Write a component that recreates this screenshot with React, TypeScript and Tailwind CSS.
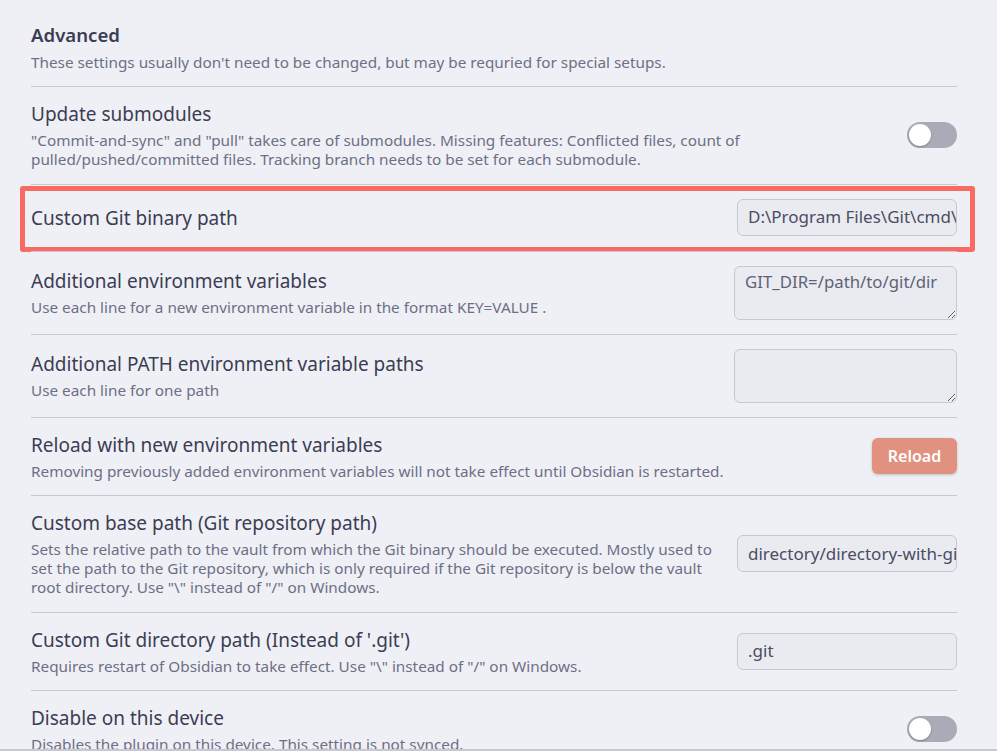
import React from "react";

const font = { fontFamily: '"Noto Sans", "Open Sans", sans-serif' };

function Toggle() {
  return (
    <div className="relative h-[26px] w-[50px] shrink-0 rounded-full bg-[#a9abb9]">
      <div className="absolute left-[2px] top-[2px] h-[22px] w-[22px] rounded-full bg-white shadow-[0_1px_2px_rgba(0,0,0,0.25)]" />
    </div>
  );
}

function TextInput({ value }: { value: string }) {
  return (
    <div className="flex h-[37px] w-[220px] shrink-0 items-center overflow-hidden whitespace-nowrap rounded-[6px] border border-[#c6c8d3] bg-[#e9ebf1] pl-[10px] text-[17px] text-[#4b4d62]">
      {value}
    </div>
  );
}

function Area({ placeholder }: { placeholder?: string }) {
  return (
    <textarea
      readOnly
      placeholder={placeholder}
      className="block h-[54px] w-[223px] shrink-0 rounded-[6px] border border-[#c6c8d3] bg-[#e9ebf1] px-[10px] py-[3px] text-[16.8px] leading-[24px] text-[#4b4d62] outline-none placeholder:text-[#5f6277]"
      style={font}
    />
  );
}

function Row({
  title,
  desc,
  control,
  children,
  tall,
}: {
  title: string;
  desc?: React.ReactNode;
  control: React.ReactNode;
  children?: React.ReactNode;
  tall?: boolean;
}) {
  return (
    <div
      className={
        tall
          ? "relative flex items-center justify-between gap-[24px] border-t border-[#c7c8d4] pb-[15px] pt-[14px]"
          : "relative flex items-center justify-between gap-[24px] border-t border-[#c7c8d4] py-[14px]"
      }
    >
      <div className="flex min-w-0 flex-col gap-[5px]">
        <div className="whitespace-nowrap pt-[2px] text-[19px] leading-[23px] text-[#3b3d54]">{title}</div>
        {desc && <div className="whitespace-nowrap text-[15.3px] leading-[19.25px] text-[#6c6f85]">{desc}</div>}
      </div>
      {control}
      {children}
    </div>
  );
}

export default function App() {
  return (
    <div className="relative h-[751px] w-[997px] overflow-hidden bg-[#eff0f5]" style={font}>
      <div className="pl-[31px] pr-[40px]">
        <div className="flex flex-col gap-[6px] pb-[14px] pt-[23px]">
          <div className="text-[18.6px] font-semibold leading-[24px] text-[#3b3d54]">Advanced</div>
          <div className="text-[15.3px] leading-[19px] text-[#6c6f85]">
            These settings usually don't need to be changed, but may be requried for special setups.
          </div>
        </div>
        <Row
          title="Update submodules"
          desc={
            <>
              "Commit-and-sync" and "pull" takes care of submodules. Missing features: Conflicted files, count of
              <br />
              pulled/pushed/committed files. Tracking branch needs to be set for each submodule.
            </>
          }
          control={<Toggle />}
        />
        <Row tall title="Custom Git binary path" control={<TextInput value="D:\Program Files\Git\cmd\git.exe" />}>
          <div className="pointer-events-none absolute -bottom-[1px] -left-[11px] -right-[18px] top-[1px] rounded-[3px] border-[5px] border-[#f86a62]" />
        </Row>
        <Row
          title="Additional environment variables"
          desc="Use each line for a new environment variable in the format KEY=VALUE ."
          control={<Area placeholder="GIT_DIR=/path/to/git/dir" />}
        />
        <Row
          title="Additional PATH environment variable paths"
          desc="Use each line for one path"
          control={<Area />}
        />
        <Row
          title="Reload with new environment variables"
          desc="Removing previously added environment variables will not take effect until Obsidian is restarted."
          control={
            <button className="h-[36px] w-[85px] shrink-0 rounded-[6px] bg-[#e0917f] text-[16px] font-semibold text-white shadow-[0_1px_3px_rgba(0,0,0,0.2)]">
              Reload
            </button>
          }
        />
        <Row
          title="Custom base path (Git repository path)"
          desc={
            <>
              Sets the relative path to the vault from which the Git binary should be executed. Mostly used to
              <br />
              set the path to the Git repository, which is only required if the Git repository is below the vault
              <br />
              root directory. Use "\" instead of "/" on Windows.
            </>
          }
          control={<TextInput value="directory/directory-with-git-repo" />}
        />
        <Row
          title="Custom Git directory path (Instead of '.git')"
          desc={'Requires restart of Obsidian to take effect. Use "\\" instead of "/" on Windows.'}
          control={<TextInput value=".git" />}
        />
        <Row
          title="Disable on this device"
          desc="Disables the plugin on this device. This setting is not synced."
          control={<Toggle />}
        />
      </div>
      <div className="absolute bottom-0 left-0 right-0 h-[2px] bg-[#c7c8d4]" />
    </div>
  );
}
